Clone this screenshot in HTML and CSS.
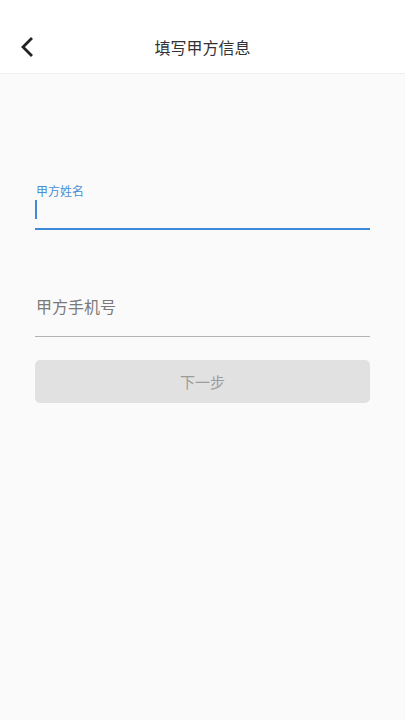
FILE: index.html
```html
<!DOCTYPE html>
<html lang="zh">
<head>
<meta charset="utf-8">
<link rel="stylesheet" href="styles.css">
</head>
<body>
<div class="page">
  <header class="bar">
    <span class="back">
      <svg width="14" height="20" viewBox="0 0 14 20"><path d="M11 2 L3 10 L11 18" fill="none" stroke="#222" stroke-width="2.8" stroke-linecap="square"/></svg>
    </span>
    <h1 class="title">填写甲方信息</h1>
  </header>
  <main class="form">
    <div class="field active">
      <label class="label">甲方姓名</label>
      <div class="input"><span class="cursor"></span></div>
    </div>
    <div class="field">
      <div class="input placeholder">甲方手机号</div>
    </div>
    <button class="next">下一步</button>
  </main>
</div>
</body>
</html>
```
FILE: styles.css
```css
* { box-sizing: border-box; }
html, body { margin: 0; padding: 0; }
body {
  font-family: "Noto Sans CJK SC", "Noto Sans", sans-serif;
  background: #fafafa;
}
.page { width: 405px; min-height: 720px; background: #fafafa; }
.bar {
  height: 74px;
  background: #fff;
  border-bottom: 1px solid #efefef;
  display: flex;
  align-items: center;
  justify-content: center;
  position: relative;
  padding-top: 20px;
}
.back {
  position: absolute;
  left: 20px;
  top: 37px;
  width: 14px;
  height: 20px;
  display: flex;
}
.title {
  margin: 0;
  font-size: 16px;
  font-weight: 400;
  color: #333;
  line-height: 20px;
}
.form {
  padding: 109px 35px 0 35px;
  display: flex;
  flex-direction: column;
}
.field { display: flex; flex-direction: column; }
.label {
  font-size: 12px;
  color: #4a8fd4;
  line-height: 16px;
  padding-left: 1px;
}
.active .input {
  height: 31px;
  border-bottom: 2px solid #3f8ad8;
  display: flex;
  align-items: flex-start;
  padding-top: 1px;
}
.cursor {
  display: block;
  width: 2px;
  height: 19px;
  background: #3f8ad8;
}
.field + .field { margin-top: 53px; }
.input.placeholder {
  height: 54px;
  border-bottom: 1px solid #b3b3b3;
  font-size: 16px;
  color: #7a7a7a;
  line-height: 22px;
  padding-top: 12px;
  padding-left: 1px;
}
.next {
  margin-top: 23px;
  height: 43px;
  border: none;
  border-radius: 5px;
  background: #e1e1e1;
  color: #9c9c9c;
  font-family: inherit;
  font-size: 15px;
  padding: 0;
}
```
